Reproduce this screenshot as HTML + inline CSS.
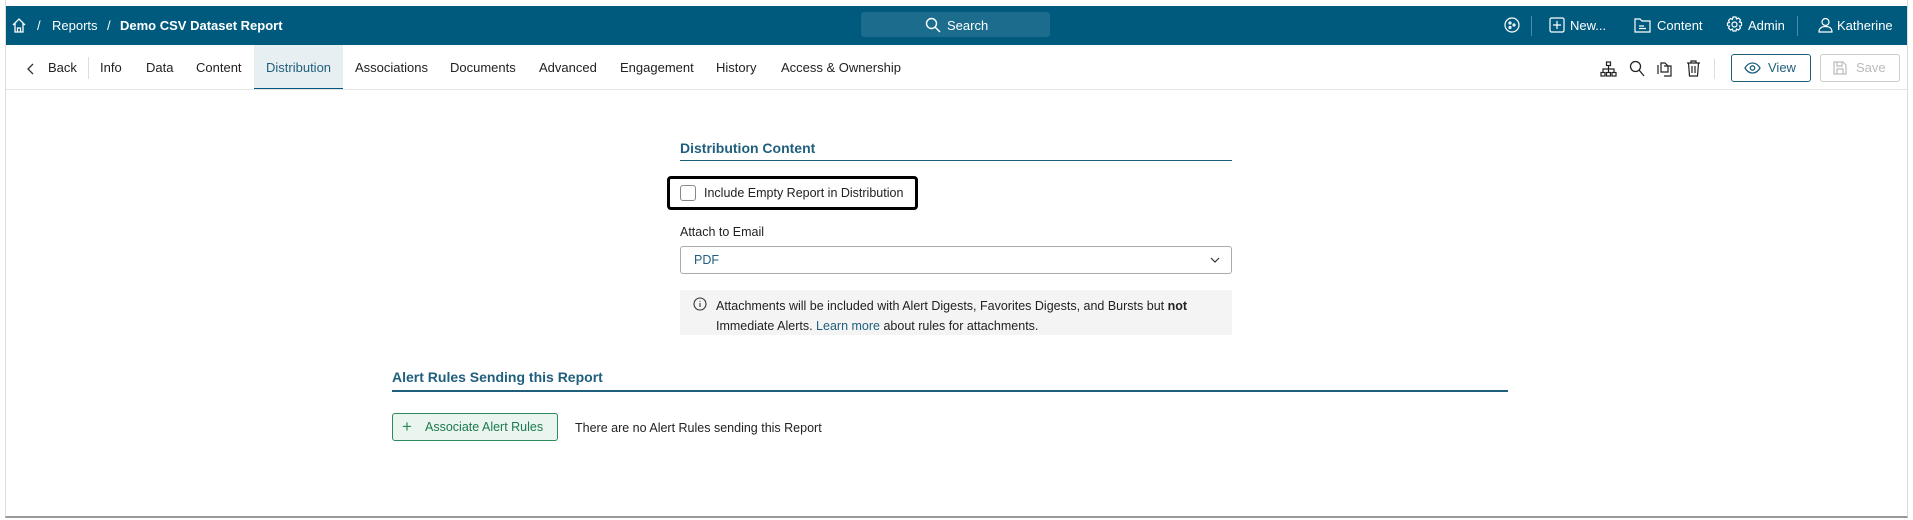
<!DOCTYPE html>
<html><head><meta charset="utf-8"><style>
*{box-sizing:border-box;margin:0;padding:0}
body{width:1913px;height:520px;background:#fff;font-family:"Liberation Sans",Arial,sans-serif;font-size:13px;color:#222;position:relative;overflow:hidden}
.frame{position:absolute;left:5px;top:0;width:1903px;height:518px;border-left:1px solid #ddd;border-right:1px solid #ddd;border-bottom:2px solid #999}
.hdr{position:absolute;left:6px;top:6px;width:1901px;height:39px;background:#005a7e;color:#fff}
.a{position:absolute;white-space:nowrap}
.hdr .a{top:12px;font-size:13px}
.tabs .a{top:60px;font-size:13px;color:#222}
svg{position:absolute}
</style></head><body>
<div class="frame"></div>
<div class="hdr">
 <svg style="left:6px;top:11px" width="14" height="16" viewBox="0 0 14 16" fill="none" stroke="#fff" stroke-width="1.3"><path d="M1 8L7 2l6 6M3 6.5V15h8V6.5M5.5 15v-4h3v4"/></svg>
 <div class="a" style="left:31px">/</div>
 <div class="a" style="left:46px">Reports</div>
 <div class="a" style="left:101px">/</div>
 <div class="a" style="left:114px;font-weight:bold">Demo CSV Dataset Report</div>
 <div style="position:absolute;left:855px;top:6px;width:189px;height:25px;background:#1b6c8d;border-radius:3px"></div>
 <svg style="left:919px;top:11px" width="16" height="16" viewBox="0 0 16 16" fill="none" stroke="#fff" stroke-width="1.4"><circle cx="6.5" cy="6.5" r="5"/><path d="M10 10l5 5"/></svg>
 <div class="a" style="left:941px">Search</div>
 <svg style="left:1498px;top:11px" width="16" height="16" viewBox="0 0 16 16" fill="none" stroke="#fff" stroke-width="1.2"><circle cx="8" cy="8" r="7"/><circle cx="6" cy="6" r="1"/><circle cx="10" cy="8" r="1"/><circle cx="6" cy="10.5" r="1"/></svg>
 <div style="position:absolute;left:1525px;top:10px;width:1px;height:20px;background:#4d8aa5"></div>
 <svg style="left:1543px;top:11px" width="16" height="16" viewBox="0 0 16 16" fill="none" stroke="#fff" stroke-width="1.2"><rect x="1" y="1" width="14" height="14" rx="1.5"/><path d="M8 4v8M4 8h8"/></svg>
 <div class="a" style="left:1564px">New...</div>
 <svg style="left:1628px;top:11px" width="17" height="16" viewBox="0 0 17 16" fill="none" stroke="#fff" stroke-width="1.2"><path d="M1 2h5l2 2h8v11H1z M5 9h5M5 11.5h7"/></svg>
 <div class="a" style="left:1651px">Content</div>
 <svg style="left:1720px;top:10px" width="17" height="17" viewBox="0 0 17 17" fill="none" stroke="#fff" stroke-width="1.2"><circle cx="8.5" cy="8.5" r="2.5"/><path d="M7 1h3l.5 2 2-1 2 2-1 2 2 .5v3l-2 .5 1 2-2 2-2-1-.5 2H7l-.5-2-2 1-2-2 1-2-2-.5V7l2-.5-1-2 2-2 2 1z"/></svg>
 <div class="a" style="left:1742px">Admin</div>
 <div style="position:absolute;left:1791px;top:10px;width:1px;height:20px;background:#4d8aa5"></div>
 <svg style="left:1812px;top:11px" width="15" height="16" viewBox="0 0 15 16" fill="none" stroke="#fff" stroke-width="1.2"><circle cx="7.5" cy="5" r="3.5"/><path d="M1 15c0-4 3-5.5 6.5-5.5S14 11 14 15z"/></svg>
 <div class="a" style="left:1831px">Katherine</div>
</div>
<div class="tabs">
 <div style="position:absolute;left:254px;top:45px;width:89px;height:45px;background:#e8eff3;border-bottom:2px solid #005a7e"></div>
 <div style="position:absolute;left:6px;top:89px;width:1901px;height:1px;background:#e3e3e3"></div>
 <svg style="left:27px;top:63px" width="8" height="12" viewBox="0 0 8 12" fill="none" stroke="#333" stroke-width="1.3"><path d="M6 1L1 6l5 5"/></svg>
 <div class="a" style="left:48px">Back</div>
 <div style="position:absolute;left:88px;top:57px;width:1px;height:22px;background:#ddd"></div>
 <div class="a" style="left:100px">Info</div>
 <div class="a" style="left:146px">Data</div>
 <div class="a" style="left:196px">Content</div>
 <div class="a" style="left:266px;color:#1f5f7d">Distribution</div>
 <div class="a" style="left:355px">Associations</div>
 <div class="a" style="left:450px">Documents</div>
 <div class="a" style="left:539px">Advanced</div>
 <div class="a" style="left:620px">Engagement</div>
 <div class="a" style="left:716px">History</div>
 <div class="a" style="left:781px">Access &amp; Ownership</div>
 <svg style="left:1600px;top:61px" width="17" height="16" viewBox="0 0 17 16" fill="none" stroke="#222" stroke-width="1.2"><rect x="6.5" y="1" width="4" height="3.5"/><rect x="1" y="11.5" width="4" height="3.5"/><rect x="6.5" y="11.5" width="4" height="3.5"/><rect x="12" y="11.5" width="4" height="3.5"/><path d="M8.5 4.5v7M3 11.5V8h11v3.5"/></svg>
 <svg style="left:1629px;top:60px" width="16" height="17" viewBox="0 0 16 17" fill="none" stroke="#222" stroke-width="1.3"><circle cx="6.5" cy="6.5" r="5"/><path d="M10 10l5 6"/></svg>
 <svg style="left:1657px;top:60px" width="15" height="17" viewBox="0 0 15 17" fill="none" stroke="#222" stroke-width="1.2"><path d="M4 3h4l3 3v6H4zM7 6h7v10H7"/><path d="M1 5v9"/></svg>
 <svg style="left:1686px;top:60px" width="15" height="17" viewBox="0 0 15 17" fill="none" stroke="#222" stroke-width="1.2"><path d="M1 3h13M5 3V1h5v2M2.5 3l1 13h8l1-13M6 6v7M9 6v7"/></svg>
 <div style="position:absolute;left:1714px;top:59px;width:1px;height:20px;background:#ddd"></div>
 <div style="position:absolute;left:1731px;top:54px;width:80px;height:28px;border:1px solid #1f5f7d;border-radius:3px"></div>
 <svg style="left:1744px;top:62px" width="17" height="12" viewBox="0 0 17 12" fill="none" stroke="#1f5f7d" stroke-width="1.3"><path d="M1 6c2-3.5 4.5-5 7.5-5s5.5 1.5 7.5 5c-2 3.5-4.5 5-7.5 5S3 9.5 1 6z"/><circle cx="8.5" cy="6" r="2.2"/></svg>
 <div class="a" style="left:1768px;color:#1f5f7d">View</div>
 <div style="position:absolute;left:1820px;top:54px;width:80px;height:28px;border:1px solid #ccc;border-radius:3px"></div>
 <svg style="left:1833px;top:61px" width="14" height="14" viewBox="0 0 14 14" fill="none" stroke="#bbb" stroke-width="1.2"><path d="M1 1h9l3 3v9H1z M4 1v4h5V1M4 13V8h6v5"/></svg>
 <div class="a" style="left:1856px;color:#bbb">Save</div>
</div>
<div class="a" style="left:680px;top:140px;font-size:14px;font-weight:bold;color:#1f5f7d">Distribution Content</div>
<div style="position:absolute;left:680px;top:160px;width:552px;height:1px;background:#1f5f7d"></div>
<div style="position:absolute;left:667px;top:176px;width:251px;height:34px;border:3px solid #000;border-radius:4px"></div>
<div style="position:absolute;left:680px;top:185px;width:16px;height:16px;border:1px solid #888;border-radius:3px"></div>
<div class="a" style="left:704px;top:186px;font-size:12.5px">Include Empty Report in Distribution</div>
<div class="a" style="left:680px;top:225px;font-size:12.5px">Attach to Email</div>
<div style="position:absolute;left:680px;top:246px;width:552px;height:28px;border:1px solid #aaa;border-radius:3px"></div>
<div class="a" style="left:694px;top:253px;font-size:12.5px;color:#1f5f7d">PDF</div>
<svg style="left:1210px;top:257px" width="10" height="7" viewBox="0 0 10 7" fill="none" stroke="#333" stroke-width="1.2"><path d="M1 1l4 4 4-4"/></svg>
<div style="position:absolute;left:680px;top:290px;width:552px;height:45px;background:#f4f4f4"></div>
<svg style="left:693px;top:297px" width="14" height="14" viewBox="0 0 14 14" fill="none" stroke="#333" stroke-width="1.1"><circle cx="7" cy="7" r="6"/><path d="M7 6v4M7 3.8v.8"/></svg>
<div class="a" style="left:716px;top:296px;font-size:12.5px;line-height:20px">Attachments will be included with Alert Digests, Favorites Digests, and Bursts but <b>not</b><br>Immediate Alerts. <span style="color:#1f5f7d">Learn more</span> about rules for attachments.</div>
<div class="a" style="left:392px;top:369px;font-size:14px;font-weight:bold;color:#1f5f7d">Alert Rules Sending this Report</div>
<div style="position:absolute;left:392px;top:390px;width:1116px;height:2px;background:#1f5f7d"></div>
<div style="position:absolute;left:392px;top:413px;width:166px;height:28px;border:1px solid #2a8a5a;border-radius:3px;background:#eaf5ef"></div>
<div class="a" style="left:402px;top:417px;font-size:17px;color:#2a8a5a">+</div>
<div class="a" style="left:425px;top:420px;font-size:12.5px;color:#1e7a4e">Associate Alert Rules</div>
<div class="a" style="left:575px;top:421px;font-size:12.5px">There are no Alert Rules sending this Report</div>
</body></html>
